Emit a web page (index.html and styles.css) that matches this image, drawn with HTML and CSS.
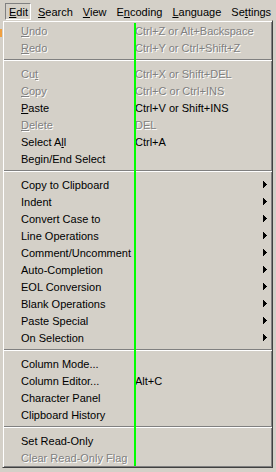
FILE: index.html
```html
<!DOCTYPE html>
<html>
<head>
  <title>Edit menu</title>
  <link rel="stylesheet" href="styles.css">
</head>
<body>
  <div class="menubar">
    <span class="top open"><u>E</u>dit</span>
    <span class="top"><u>S</u>earch</span>
    <span class="top"><u>V</u>iew</span>
    <span class="top">E<u>n</u>coding</span>
    <span class="top"><u>L</u>anguage</span>
    <span class="top">Se<u>t</u>tings</span>
  </div>

  <div class="menu">
    <div class="item off"><span class="label"><u>U</u>ndo</span><span class="key">Ctrl+Z or Alt+Backspace</span></div>
    <div class="item off"><span class="label"><u>R</u>edo</span><span class="key">Ctrl+Y or Ctrl+Shift+Z</span></div>
    <div class="sep"></div>
    <div class="item off"><span class="label">Cu<u>t</u></span><span class="key">Ctrl+X or Shift+DEL</span></div>
    <div class="item off"><span class="label"><u>C</u>opy</span><span class="key">Ctrl+C or Ctrl+INS</span></div>
    <div class="item"><span class="label"><u>P</u>aste</span><span class="key">Ctrl+V or Shift+INS</span></div>
    <div class="item off"><span class="label"><u>D</u>elete</span><span class="key">DEL</span></div>
    <div class="item"><span class="label">Select A<u>l</u>l</span><span class="key">Ctrl+A</span></div>
    <div class="item"><span class="label">Begin/End Select</span></div>
    <div class="sep"></div>
    <div class="item sub"><span class="label">Copy to Clipboard</span><svg class="arrow" width="4" height="7"><rect x="0" y="0" width="1" height="7"/><rect x="1" y="1" width="1" height="5"/><rect x="2" y="2" width="1" height="3"/><rect x="3" y="3" width="1" height="1"/></svg></div>
    <div class="item sub"><span class="label">Indent</span><svg class="arrow" width="4" height="7"><rect x="0" y="0" width="1" height="7"/><rect x="1" y="1" width="1" height="5"/><rect x="2" y="2" width="1" height="3"/><rect x="3" y="3" width="1" height="1"/></svg></div>
    <div class="item sub"><span class="label">Convert Case to</span><svg class="arrow" width="4" height="7"><rect x="0" y="0" width="1" height="7"/><rect x="1" y="1" width="1" height="5"/><rect x="2" y="2" width="1" height="3"/><rect x="3" y="3" width="1" height="1"/></svg></div>
    <div class="item sub"><span class="label">Line Operations</span><svg class="arrow" width="4" height="7"><rect x="0" y="0" width="1" height="7"/><rect x="1" y="1" width="1" height="5"/><rect x="2" y="2" width="1" height="3"/><rect x="3" y="3" width="1" height="1"/></svg></div>
    <div class="item sub"><span class="label">Comment/Uncomment</span><svg class="arrow" width="4" height="7"><rect x="0" y="0" width="1" height="7"/><rect x="1" y="1" width="1" height="5"/><rect x="2" y="2" width="1" height="3"/><rect x="3" y="3" width="1" height="1"/></svg></div>
    <div class="item sub"><span class="label">Auto-Completion</span><svg class="arrow" width="4" height="7"><rect x="0" y="0" width="1" height="7"/><rect x="1" y="1" width="1" height="5"/><rect x="2" y="2" width="1" height="3"/><rect x="3" y="3" width="1" height="1"/></svg></div>
    <div class="item sub"><span class="label">EOL Conversion</span><svg class="arrow" width="4" height="7"><rect x="0" y="0" width="1" height="7"/><rect x="1" y="1" width="1" height="5"/><rect x="2" y="2" width="1" height="3"/><rect x="3" y="3" width="1" height="1"/></svg></div>
    <div class="item sub"><span class="label">Blank Operations</span><svg class="arrow" width="4" height="7"><rect x="0" y="0" width="1" height="7"/><rect x="1" y="1" width="1" height="5"/><rect x="2" y="2" width="1" height="3"/><rect x="3" y="3" width="1" height="1"/></svg></div>
    <div class="item sub"><span class="label">Paste Special</span><svg class="arrow" width="4" height="7"><rect x="0" y="0" width="1" height="7"/><rect x="1" y="1" width="1" height="5"/><rect x="2" y="2" width="1" height="3"/><rect x="3" y="3" width="1" height="1"/></svg></div>
    <div class="item sub"><span class="label">On Selection</span><svg class="arrow" width="4" height="7"><rect x="0" y="0" width="1" height="7"/><rect x="1" y="1" width="1" height="5"/><rect x="2" y="2" width="1" height="3"/><rect x="3" y="3" width="1" height="1"/></svg></div>
    <div class="sep"></div>
    <div class="item"><span class="label">Column Mode...</span></div>
    <div class="item"><span class="label">Column Editor...</span><span class="key">Alt+C</span></div>
    <div class="item"><span class="label">Character Panel</span></div>
    <div class="item"><span class="label">Clipboard History</span></div>
    <div class="sep"></div>
    <div class="item"><span class="label">Set Read-Only</span></div>
    <div class="item off"><span class="label">Clear Read-Only Flag</span></div>
  </div>

  <!-- bits of the window under the menu, and the edge marker on top -->
  <div class="toolbar-bit"></div>
  <div class="guide"></div>
</body>
</html>
```

FILE: styles.css
```css
html, body {
  margin: 0;
  height: 100%;
}
body {
  position: relative;
  overflow: hidden;
  background: #d4d0c8;
  color: #000;
  font-family: "Liberation Sans", Arial, sans-serif;
  font-size: 11px;
}
u {
  text-underline-offset: 1px;
}

/* menu bar */
.menubar {
  display: flex;
  height: 20px;
  padding-left: 5px;
}
.top {
  box-sizing: border-box;
  height: 17px;
  margin-top: 3px;
  padding: 0 4px;
  line-height: 17px;
  border: 1px solid transparent;
  white-space: nowrap;
}
.top.open {
  padding: 0 2px 0 3px;
  margin-right: 2px;
  border-color: #808080 #fff #fff #808080;
}

/* dropdown */
.menu {
  box-sizing: border-box;
  width: 271px;
  margin-left: 2px;
  padding: 1px;
  border: 1px solid;
  border-color: #d4d0c8 #404040 #404040 #d4d0c8;
  box-shadow: inset 1px 1px #fff, inset -1px -1px #808080;
}
.item {
  display: flex;
  align-items: flex-start;
  height: 17px;
  padding: 0 4px 0 17px;
  line-height: 19px;
  white-space: nowrap;
}
.label {
  flex: none;
  width: 114px;
}
.key {
  flex: 1;
}
.off {
  color: #808080;
  text-shadow: 1px 1px 0 #fff;
}
.arrow {
  margin: 5px 0 0 auto;
  fill: #000;
  shape-rendering: crispEdges;
}
.sep {
  margin: 3px -1px 4px 0;
  border-top: 1px solid #808080;
  border-bottom: 1px solid #fff;
}

.toolbar-bit {
  position: absolute;
  left: 0;
  top: 29px;
  width: 2px;
  height: 8px;
  background: #f0a040;
}
.guide {
  position: absolute;
  left: 134px;
  top: 23px;
  width: 2px;
  height: 443px;
  background: #00ff00;
}
```
